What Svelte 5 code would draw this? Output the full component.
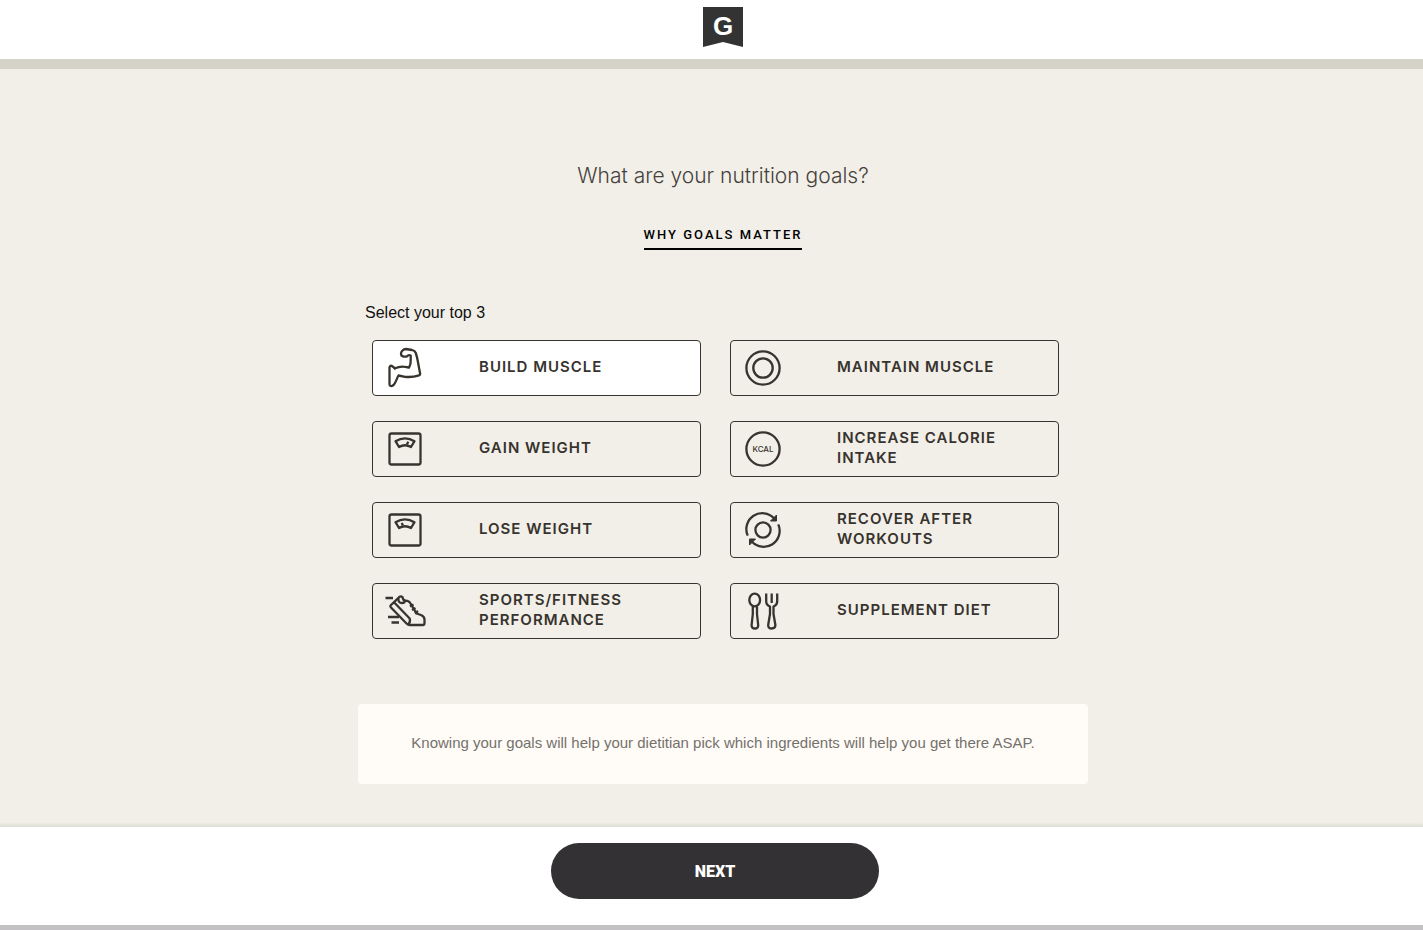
<script lang="ts">
	const goals = [
		{ id: "build", label: "Build muscle" },
		{ id: "maintain", label: "Maintain muscle" },
		{ id: "gain", label: "Gain weight" },
		{ id: "calories", label: "Increase calorie intake" },
		{ id: "lose", label: "Lose weight" },
		{ id: "recover", label: "Recover after workouts" },
		{ id: "sports", label: "Sports/Fitness performance" },
		{ id: "supplement", label: "Supplement diet" }
	];
	const max = 3;

	let selected = $state(["build"]);
</script>

<div class="page">
	<header>
		<a href="#home" aria-label="Home">
			<svg class="logo" viewBox="0 0 40 40">
				<path d="M0 0h40v40l-20-5-20 5z" fill="#333" />
				<text x="20" y="28" text-anchor="middle">G</text>
			</svg>
		</a>
	</header>
	<div class="progress"></div>

	<main>
		<div class="content">
			<h1>What are your nutrition goals?</h1>
			<button class="why" type="button">WHY GOALS MATTER</button>

			<fieldset>
				<legend>Select your top 3</legend>
				<div class="goals">
					{#each goals as goal (goal.id)}
						<label class="goal" class:active={selected.includes(goal.id)}>
							<input
								type="checkbox"
								value={goal.id}
								bind:group={selected}
								disabled={selected.length >= max && !selected.includes(goal.id)}
							/>
							<svg class="icon" viewBox="0 0 48 48" aria-hidden="true">
								{#if goal.id === "build"}
									<path d="M21.3 6.7Q23 5 25 5L31 6Q34 6.7 34.8 9C36.5 14 37 18 37.5 21L39.2 30Q39.2 31 38 31.3C33 33 28 33.2 24 32.8L17.5 31.5C16 34 15 38 13 40.5Q11.5 42.5 9.5 42Q8.5 41.7 8.5 40V23.5Q8.7 21.5 10.5 21.8L14 24.2C18 22.5 22 22.3 25 23L28 23.6Q30 20 29.7 16V11.5Q27.5 10.5 26 12.3Q24 13 22 12.4Q20 12 20 9.5Q20 8 21.3 6.7ZM14 24.2L13.1 25.5" />
								{:else if goal.id === "maintain"}
									<circle cx="24" cy="24" r="16.6" />
									<circle cx="24" cy="24" r="9.7" />
								{:else if goal.id === "gain" || goal.id === "lose"}
									<rect x="8.5" y="8.5" width="31" height="31" rx="2" />
									<path d="M14.5 16.2Q24 10.5 33.5 16.2L30 22Q24 18.5 18 22Z" />
									<path d={goal.id === "gain" ? "M25.8 19.5L27.3 16.8" : "M21.8 19.5L20.8 16.8"} />
								{:else if goal.id === "calories"}
									<circle cx="24" cy="24" r="16.6" />
									<text x="24" y="27" text-anchor="middle">KCAL</text>
								{:else if goal.id === "recover"}
									<circle cx="24" cy="24" r="7.6" />
									<path d="M8.7 29.6A16 16 0 0 1 35 12.2M39.3 18.4A16 16 0 0 1 13 35.8" />
									<path class="solid" d="M37.5 9V15H31.5ZM10.5 39V33H16.5Z" />
								{:else if goal.id === "sports"}
									<path d="M4.5 11H12M7 30H18M10.5 35.5H18" />
									<path d="M9.5 18.5L18.5 9.8Q20 8.8 21.5 10.2C22 13 24 14 26.5 13.8Q29 14.5 29.8 17L35.5 26.5L40 28Q43.5 29.5 43.5 32.5V36Q43.5 38 42 38H29Q27 38 25.5 36.5L10 20.5Q9 19.5 9.5 18.5Z" />
									<path d="M13 15.2L28.7 31.5Q29.7 34.5 27.5 37.5M17.5 11.5Q17 16 21 16Q24 16 24 13.5M29 19.5L32.5 17.5M31 23L34.5 21M34 26.5L37 24" />
								{:else}
									<ellipse cx="15.7" cy="13" rx="5.4" ry="6.3" />
									<path d="M13.8 19.5V27L12.6 38Q12.5 41.5 15.9 41.5T19.2 38L18 27V19.5" />
									<path d="M27.2 6.5V14.5Q27.2 18 31 19.5V27L29.2 38Q29 41.5 32.7 41.5T36.4 38L34.5 27V19.5Q38.2 18 38.2 14.5V6.5M32.7 6.5V16" />
								{/if}
							</svg>
							<span>{goal.label}</span>
						</label>
					{/each}
				</div>
			</fieldset>

			<p class="note">
				Knowing your goals will help your dietitian pick which ingredients will help you get there ASAP.
			</p>
		</div>
	</main>

	<footer>
		<button class="next" type="button">NEXT</button>
	</footer>
</div>

<style>
	:global(body) {
		margin: 0;
	}

	.page {
		display: flex;
		flex-direction: column;
		min-height: 100vh;
		background: #f2efe8;
		font-family: "Liberation Sans", Arial, sans-serif;
		color: #37332e;
	}

	header {
		display: flex;
		justify-content: center;
		padding: 7px 0 12px 23px;
		background: #fff;
	}

	header a,
	.logo {
		display: block;
		width: 40px;
		height: 40px;
	}

	.logo text {
		font: 700 26px "Liberation Sans", Arial, sans-serif;
		fill: #fff;
	}

	.progress {
		height: 10px;
		background: #d5d3c7;
	}

	main {
		flex: 1;
		padding: 92px 0 43px 23px;
		background: linear-gradient(to top, #dedfd4, #f2efe8 5px);
	}

	.content {
		display: flex;
		flex-direction: column;
		align-items: center;
		max-width: 730px;
		margin: 0 auto;
	}

	h1 {
		margin: 0;
		font: 300 21px/30px Inter, sans-serif;
		color: #45413c;
	}

	.why {
		margin: 34px 0 0;
		padding: 0 0 3px;
		border: none;
		border-bottom: 2px solid #000;
		background: none;
		font: 500 13px/20px Roboto, sans-serif;
		letter-spacing: 2px;
		color: #000;
		cursor: pointer;
	}

	fieldset {
		box-sizing: border-box;
		width: 100%;
		min-width: 0;
		margin: 53px 0 0;
		padding: 0 29px 0 14px;
		border: none;
	}

	legend {
		margin-left: -7px;
		padding: 0;
		font-size: 16px;
		line-height: 20px;
		color: #111;
	}

	.goals {
		display: grid;
		grid-template-columns: 1fr 1fr;
		gap: 25px 29px;
		padding-top: 17px;
	}

	.goal {
		position: relative;
		box-sizing: border-box;
		display: flex;
		align-items: center;
		gap: 50px;
		min-height: 56px;
		padding: 0 40px 0 8px;
		border: 1px solid #37332e;
		border-radius: 4px;
		font: 600 15px/20px Inter, sans-serif;
		letter-spacing: 1px;
		text-transform: uppercase;
		cursor: pointer;
	}

	.goal span {
		padding-bottom: 2px;
	}

	.goal.active {
		background: #fff;
	}

	.goal input {
		position: absolute;
		opacity: 0;
	}

	.goal:focus-within {
		outline: 2px solid #8c887c;
	}

	.icon {
		flex: none;
		width: 48px;
		height: 48px;
		fill: none;
		stroke: #37332e;
		stroke-width: 2.3;
		stroke-linejoin: round;
	}

	.icon text {
		font: 500 8px Inter, sans-serif;
		letter-spacing: 0;
		fill: #37332e;
		stroke: none;
	}

	.icon .solid {
		fill: #37332e;
		stroke-width: 1;
	}

	.note {
		box-sizing: border-box;
		width: 100%;
		margin: 65px 0 0;
		padding: 29px 40px 31px;
		border-radius: 4px;
		background: #fffcf7;
		font-size: 15px;
		line-height: 20px;
		text-align: center;
		color: #74716c;
	}

	footer {
		display: flex;
		justify-content: center;
		padding: 16px 0 26px 7px;
		border-bottom: 5px solid #c4c1c4;
		background: #fff;
	}

	.next {
		width: 328px;
		height: 56px;
		border: none;
		border-radius: 28px;
		background: #343134;
		font: 900 16px Roboto, sans-serif;
		color: #fff;
		cursor: pointer;
	}

	@media (max-width: 700px) {
		.goals {
			grid-template-columns: 1fr;
		}
	}
</style>
